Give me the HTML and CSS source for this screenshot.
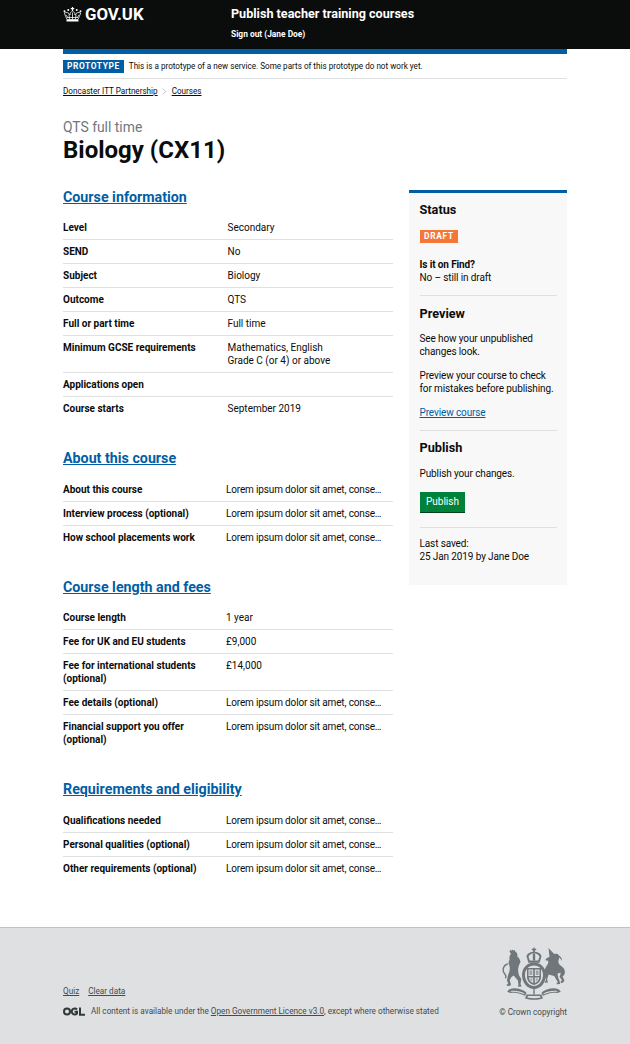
FILE: index.html
```html
<!DOCTYPE html>
<html lang="en">
<head>
<meta charset="utf-8">
<title>Biology (CX11)</title>
<link rel="stylesheet" href="styles.css">
</head>
<body>
<header class="site-header">
  <div class="header-inner">
    <a class="logo" href="#">
      <svg class="crown" viewBox="0 0 38 30" width="19" height="15" aria-hidden="true">
        <g fill="none" stroke="#fff" stroke-width="1.500">
          <path d="M8 25 L2.500 12 C7 9.500 12 11.500 14 16 C14 12 15.500 10 19 8 C22.500 10 24 12 24 16 C26 11.500 31 9.500 35.500 12 L30 25 Z"/>
          <path d="M8 21 H30 M12 15 L13 25 M19 11 V25 M26 15 L25 25 M6 16 L9.500 21 M32 16 L28.500 21"/>
        </g>
        <path fill="#fff" d="M17.800 0 H20.200 V2 H22.500 V4.500 H20.200 V8 H17.800 V4.500 H15.500 V2 H17.800 Z"/>
        <circle cx="3" cy="8.500" r="2" fill="#fff"/><circle cx="35" cy="8.500" r="2" fill="#fff"/>
        <circle cx="10.500" cy="6" r="2" fill="#fff"/><circle cx="27.500" cy="6" r="2" fill="#fff"/>
        <rect x="7" y="25.500" width="24" height="3.500" fill="#fff"/>
      </svg>
      <span>GOV.UK</span>
    </a>
    <div class="service">
      <a class="service-name" href="#">Publish teacher training courses</a>
      <a class="sign-out" href="#">Sign out (Jane Doe)</a>
    </div>
  </div>
</header>

<div class="width">
  <div class="blue-bar"></div>
  <div class="phase">
    <strong class="phase-tag">PROTOTYPE</strong>
    <span>This is a prototype of a new service. Some parts of this prototype do not work yet.</span>
  </div>
  <nav class="breadcrumbs">
    <a href="#">Doncaster ITT Partnership</a>
    <svg class="chevron" viewBox="0 0 6 8" width="5" height="7" aria-hidden="true"><path d="M1 .5 L4.500 4 L1 7.500" fill="none" stroke="#a0a4a7" stroke-width=".8"/></svg>
    <a href="#">Courses</a>
  </nav>

  <div class="title-block">
    <span class="caption">QTS full time</span>
    <h1>Biology (CX11)</h1>
  </div>

  <main class="columns">
    <div class="main-col">
      <section class="section">
        <h2><a href="#">Course information</a></h2>
        <dl class="list list-wide">
          <div class="row"><dt>Level</dt><dd>Secondary</dd></div>
          <div class="row"><dt>SEND</dt><dd>No</dd></div>
          <div class="row"><dt>Subject</dt><dd>Biology</dd></div>
          <div class="row"><dt>Outcome</dt><dd>QTS</dd></div>
          <div class="row"><dt>Full or part time</dt><dd>Full time</dd></div>
          <div class="row"><dt>Minimum GCSE requirements</dt><dd>Mathematics, English<br>Grade C (or 4) or above</dd></div>
          <div class="row"><dt>Applications open</dt><dd></dd></div>
          <div class="row"><dt>Course starts</dt><dd>September 2019</dd></div>
        </dl>
      </section>

      <section class="section">
        <h2><a href="#">About this course</a></h2>
        <dl class="list">
          <div class="row"><dt>About this course</dt><dd class="snippet">Lorem ipsum dolor sit amet, conse…</dd></div>
          <div class="row"><dt>Interview process (optional)</dt><dd class="snippet">Lorem ipsum dolor sit amet, conse…</dd></div>
          <div class="row"><dt>How school placements work</dt><dd class="snippet">Lorem ipsum dolor sit amet, conse…</dd></div>
        </dl>
      </section>

      <section class="section">
        <h2><a href="#">Course length and fees</a></h2>
        <dl class="list">
          <div class="row"><dt>Course length</dt><dd>1 year</dd></div>
          <div class="row"><dt>Fee for UK and EU students</dt><dd>£9,000</dd></div>
          <div class="row"><dt>Fee for international students (optional)</dt><dd>£14,000</dd></div>
          <div class="row"><dt>Fee details (optional)</dt><dd class="snippet">Lorem ipsum dolor sit amet, conse…</dd></div>
          <div class="row"><dt>Financial support you offer (optional)</dt><dd class="snippet">Lorem ipsum dolor sit amet, conse…</dd></div>
        </dl>
      </section>

      <section class="section">
        <h2><a href="#">Requirements and eligibility</a></h2>
        <dl class="list">
          <div class="row"><dt>Qualifications needed</dt><dd class="snippet">Lorem ipsum dolor sit amet, conse…</dd></div>
          <div class="row"><dt>Personal qualities (optional)</dt><dd class="snippet">Lorem ipsum dolor sit amet, conse…</dd></div>
          <div class="row"><dt>Other requirements (optional)</dt><dd class="snippet">Lorem ipsum dolor sit amet, conse…</dd></div>
        </dl>
      </section>
    </div>

    <aside class="sidebar">
      <div class="panel">
        <h3>Status</h3>
        <strong class="tag">DRAFT</strong>
        <p class="find"><b>Is it on Find?</b><br>No – still in draft</p>
      </div>
      <div class="panel">
        <h3>Preview</h3>
        <p>See how your unpublished changes look.</p>
        <p>Preview your course to check for mistakes before publishing.</p>
        <p class="preview-link"><a class="link" href="#">Preview course</a></p>
      </div>
      <div class="panel">
        <h3 class="publish-title">Publish</h3>
        <p class="publish-text">Publish your changes.</p>
        <button class="button" type="button">Publish</button>
      </div>
      <p class="saved">Last saved:<br>25 Jan 2019 by Jane Doe</p>
    </aside>
  </main>
</div>

<footer class="footer">
  <div class="footer-inner">
    <div class="footer-meta">
      <ul class="footer-links">
        <li><a href="#">Quiz</a></li>
        <li><a href="#">Clear data</a></li>
      </ul>
      <div class="licence">
        <svg class="ogl" viewBox="0 0 44 18" width="22" height="9" aria-hidden="true">
          <g fill="none" stroke="#33383a" stroke-width="4">
            <circle cx="8" cy="9" r="6"/>
            <path d="M28 5 A6 6 0 1 0 28 13 V9.500 H23"/>
            <path d="M34 1 V15.500 H44"/>
          </g>
        </svg>
        <span>All content is available under the <a href="#">Open Government Licence v3.0</a>, except where otherwise stated</span>
      </div>
    </div>
    <div class="copyright">
      <svg class="crest" viewBox="0 0 66 54" width="66" height="54" aria-hidden="true">
        <g fill="#6f777b">
          <!-- royal crown -->
          <path d="M33 0 l.9 1.800 h1.300 v1.400 h-1.300 v1.500 c3.600 .3 6.200 2 6.600 4.600 l-1.900 6.500 h-11.200 l-1.900 -6.500 c.4 -2.600 3 -4.300 6.600 -4.600 v-1.500 h-1.300 v-1.400 h1.300 Z M27.500 9.500 l1.300 4 h8.400 l1.300 -4 c-1 -2 -3 -3.300 -5.500 -3.300 s-4.500 1.300 -5.500 3.300 Z"/>
          <rect x="31.800" y="6.500" width="2.400" height="7"/>
          <!-- garter and shield -->
          <path fill-rule="evenodd" d="M33 15.500 c7 0 12 5.500 12 12.500 s-5 14 -12 14 s-12 -7 -12 -14 s5 -12.500 12 -12.500 Z M33 18.500 c-5.300 0 -9 4.200 -9 9.500 s3.700 11 9 11 s9 -5.700 9 -11 s-3.700 -9.500 -9 -9.500 Z"/>
          <path fill-rule="evenodd" d="M26 21 h14 v9 c0 4 -3 7 -7 8 c-4 -1 -7 -4 -7 -8 Z M27.500 22.500 v6.500 h4.700 v-6.500 Z M33.800 22.500 v6.500 h4.700 v-6.500 Z M27.700 30.500 c.4 2.600 2.200 4.600 4.500 5.500 v-5.500 Z M33.800 30.500 v5.500 c2.300 -.9 4.100 -2.900 4.500 -5.500 Z"/>
          <path d="M28.500 23.500 h2.700 v4.500 h-2.700 Z M34.800 23.500 h2.700 v4.500 h-2.700 Z M29 31.500 h2.200 v3 c-1 -.6 -1.800 -1.800 -2.200 -3 Z M34.800 31.500 h2.200 c-.4 1.200 -1.200 2.400 -2.200 3 Z" opacity=".6"/>
          <!-- lion -->
          <path d="M8.500 4.500 l1 -1.700 l1 .9 l1 -1.200 l1 1.200 l1 -.9 l.8 1.700 c1.700 1 2.500 3 2 5 c1.800 1.300 3 3.300 3.200 5.500 c-1 1.700 -1.800 3.800 -2.200 6 c-.5 3 .2 5.500 .8 7.500 l2.200 3.500 l-.8 5 l1.200 2.500 l-3.800 .2 l.6 -2 l-.6 -4.200 l-4.200 -5 c-1.800 .8 -3.200 2.500 -4 4.700 l.8 2.800 c.9 1.200 .2 2.600 -1 2.800 l-2.600 .2 l-.2 -1.500 l1.500 -.4 l-1.300 -4.200 l1.500 -5.800 c1.300 -2.700 1.800 -5.700 1 -8.600 c-1.200 -1.700 -1 -3.900 .2 -5.700 c-.6 -2.500 .1 -4.700 1.400 -5.800 Z"/>
          <path d="M6.800 16 c-3.200 .8 -4.800 3.200 -5.300 6 c-.4 2.700 1.200 4.700 2.400 6.400 c.5 .8 .4 1.700 -.2 2.500 l1.200 .7 c1 -1.300 1 -2.800 .1 -4.100 c-1.300 -1.700 -2.400 -3.300 -2.100 -5.300 c.3 -2 1.600 -3.600 3.900 -4.400 Z"/>
          <!-- unicorn -->
          <path d="M47.500 1 l5.700 6.100 c1.800 -.7 3.700 -.3 4.500 1 c.8 1.800 .2 4 -.3 5.900 c-.3 2 .9 3.800 2.800 5 c2.200 1.400 3.700 3.600 3.700 6 c0 2 -1 3.600 -2.400 4.500 l1.900 3.800 c-.3 1.700 -1.800 2.800 -3.400 2.600 l-.5 -1.500 l1.600 -.8 l-2.700 -4.100 c.9 -1.200 1.400 -2.600 1 -4.100 c-.7 .8 -1.700 1 -2.700 .5 c-.2 2.600 .6 5.200 1.700 7.400 l.8 3.600 l-3.400 .4 l-.2 -1.500 l1.400 -.4 l-3.800 -6.500 l-5.600 -1.500 l-1.500 4.800 l.8 3.300 l-3.100 .3 l.2 -1.600 l1 -.4 l-.7 -5.500 c-.8 -2 -1 -4.400 -.2 -6.500 c.9 -2.200 2.200 -3.800 3.200 -5.800 l-.2 -2.200 l-2.800 -.5 l.9 -1.800 l3.300 -1.700 Z"/>
          <path d="M58 8.500 c2.300 1.400 3.200 3.600 3 5.600 c-.8 -1.900 -2 -3.300 -3.800 -4.200 Z"/>
          <!-- motto ribbon -->
          <path d="M8 42.500 c4 -2 9 -1.700 14 .8 c1.800 .9 2.800 1.700 3.500 2.700 l-1.400 2.800 c-4.500 -2.300 -9.500 -4 -14.600 -2.700 l-3.300 -1.400 Z M9.500 44 l.5 .8 c4.300 -.6 8.700 .4 13.200 2.400 l.3 -.7 c-4 -2.300 -9.500 -3.300 -14 -2.500 Z" fill-rule="evenodd"/>
          <path d="M58 42.500 c-4 -2 -9 -1.700 -14 .8 c-1.800 .9 -2.800 1.700 -3.500 2.700 l1.400 2.800 c4.500 -2.300 9.500 -4 14.600 -2.700 l3.300 -1.400 Z M56.500 44 l-.5 .8 c-4.300 -.6 -8.700 .4 -13.200 2.400 l-.3 -.7 c4 -2.300 9.500 -3.300 14 -2.500 Z" fill-rule="evenodd"/>
          <path fill-rule="evenodd" d="M25.500 47.500 h15 l1.500 4 c-5.500 1.800 -12.500 1.800 -18 0 Z M27 49 l-.6 1.500 c4.300 1 9 1 13.200 0 l-.6 -1.500 Z"/>
          <rect x="32.300" y="41.500" width="1.400" height="6"/>
        </g>
      </svg>
      <span>© Crown copyright</span>
    </div>
  </div>
</footer>
</body>
</html>
```

FILE: styles.css
```css
* { box-sizing: border-box; }

html, body { margin: 0; padding: 0; }

body {
  font-family: "Roboto", "Liberation Sans", sans-serif;
  font-size: 10px;
  line-height: 13.125px;
  color: #0b0c0c;
  background: #fff;
}

a { color: inherit; }

.site-header {
  height: 48.500px;
  background: #0b0c0c;
  color: #fff;
}

.header-inner {
  width: 504px;
  margin: 0 auto;
  display: flex;
}

.logo {
  width: 168px;
  padding-top: 6px;
  display: flex;
  align-items: center;
  align-self: flex-start;
  gap: 3px;
  font-size: 16.800px;
  line-height: 16px;
  font-weight: 700;
  color: #fff;
  text-decoration: none;
}

.service {
  display: flex;
  flex-direction: column;
  padding-top: 6px;
}

.service-name {
  font-size: 12.600px;
  line-height: 16px;
  font-weight: 700;
  color: #fff;
  text-decoration: none;
}

.sign-out {
  margin-top: 7px;
  font-size: 8.400px;
  line-height: 11px;
  font-weight: 700;
  color: #fff;
  text-decoration: none;
}

.width {
  width: 504px;
  margin: 0 auto;
}

.blue-bar {
  height: 5.500px;
  background: #005ea5;
}

.phase {
  display: flex;
  align-items: center;
  gap: 5px;
  height: 24.500px;
  padding-top: 1.500px;
  border-bottom: 1px solid #dee0e2;
  font-size: 8.150px;
}

.phase-tag {
  padding: 0 4px;
  height: 13.500px;
  line-height: 13px;
  background: #005ea5;
  color: #fff;
  font-size: 8.400px;
  letter-spacing: .6px;
  font-weight: 700;
}

.breadcrumbs {
  display: flex;
  align-items: center;
  gap: 4.500px;
  padding-top: 7px;
  font-size: 8.150px;
  line-height: 11px;
}

.title-block {
  padding-top: 22px;
}

.caption {
  display: block;
  font-size: 13.900px;
  line-height: 16px;
  color: #6f777b;
}

h1 {
  margin: 2.500px 0 0;
  font-size: 24px;
  line-height: 26px;
  font-weight: 700;
}

.columns {
  display: flex;
  justify-content: space-between;
  align-items: flex-start;
  padding-top: 26px;
  padding-bottom: 47px;
}

.main-col { width: 330px; }

.section + .section { margin-top: 30px; }

h2 {
  margin: 0 0 11.300px;
  font-size: 14.250px;
  line-height: 16px;
  font-weight: 700;
}

h2 a { color: #005ea5; }

.list { margin: 0; }

.row {
  display: grid;
  grid-template-columns: 163px 1fr;
  padding: 4.940px 0;
  border-bottom: 1px solid #dee0e2;
}

.row:last-child { border-bottom: 0; }

.list-wide .row { grid-template-columns: 164.500px 1fr; }

dt { font-weight: 700; }

dd { margin: 0; }

.snippet { letter-spacing: -.15px; }

.sidebar {
  width: 158px;
  margin-top: 1px;
  border-top: 3px solid #005ea5;
  background: #f8f8f8;
  padding: 9px 10.500px 21.500px;
  letter-spacing: -.12px;
}

.sidebar p { margin: 0 0 11px; }

h3 {
  margin: 0 0 11px;
  font-size: 12.700px;
  line-height: 15px;
  font-weight: 700;
  letter-spacing: 0;
}

.sidebar .preview-link { margin-bottom: 10px; }

.publish-title { margin-top: -.5px; margin-bottom: 12px; }

.sidebar .publish-text { margin-bottom: 11.500px; }

.panel {
  padding-bottom: 1px;
  border-bottom: 1px solid #dee0e2;
  margin-bottom: 9.500px;
}

.tag {
  display: block;
  width: max-content;
  margin-top: 13px;
  padding: 0 4.500px;
  height: 13px;
  line-height: 13px;
  background: #f47738;
  color: #fff;
  font-size: 8.400px;
  letter-spacing: .7px;
  font-weight: 700;
}

.sidebar .find { margin: 14.500px 0 10.500px; }

.link { color: #005ea5; }

.button {
  display: block;
  height: 21px;
  padding: 0 6.500px;
  margin-bottom: 12.500px;
  border: 0;
  border-bottom: 1px solid #00401e;
  background: #00823b;
  color: #fff;
  font: inherit;
}

.sidebar .saved { margin: 0; }

.footer {
  height: 117px;
  background: #dee0e2;
  border-top: 1px solid #bfc1c3;
  font-size: 8.200px;
  line-height: 11px;
  color: #454a4c;
}

.footer-inner {
  width: 504px;
  margin: 0 auto;
  display: flex;
  justify-content: space-between;
  align-items: flex-end;
  height: 90px;
}

.footer-meta { padding-bottom: 1px; }

.footer-links {
  display: flex;
  gap: 9px;
  list-style: none;
  margin: 0 0 9px;
  padding: 0;
}

.licence {
  display: flex;
  align-items: center;
  gap: 6px;
}

.copyright {
  display: flex;
  flex-direction: column;
  align-items: flex-end;
  gap: 6px;
}
```
